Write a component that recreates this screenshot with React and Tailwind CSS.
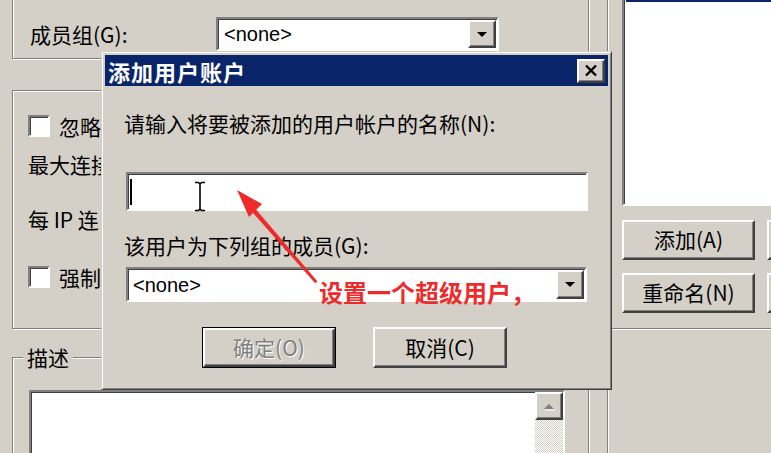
// Classic Windows dialog "添加用户账户" over a user settings form
const cjk = "font-['Noto_Sans_CJK_SC',sans-serif]";
const latin = "font-['Liberation_Sans',sans-serif]";

// classic 3D borders
const etched = "border border-[#808080] shadow-[inset_1px_1px_0_#fff,1px_1px_0_#fff]";
const raised =
  "border-2 border-t-white border-l-white border-r-[#404040] border-b-[#404040] shadow-[inset_-1px_-1px_0_#808080] bg-[#d4d0c8]";
const sunken =
  "border-2 border-t-[#808080] border-l-[#808080] border-r-white border-b-white shadow-[inset_1px_1px_0_#404040] bg-white";

function DropArrow() {
  return (
    <div className={`${raised} flex h-full w-[28px] shrink-0 items-center justify-center`}>
      <svg width="12" height="7" viewBox="0 0 12 7">
        <path d="M1 1h10L6 6z" fill="#000" />
      </svg>
    </div>
  );
}

function Combo({ className, textClass }) {
  return (
    <div className={`${sunken} flex items-stretch ${className}`}>
      <div className={`flex flex-1 items-center ${latin} text-[20px] text-black ${textClass}`}>&lt;none&gt;</div>
      <div className="py-[1px] pr-[1px]">
        <DropArrow />
      </div>
    </div>
  );
}

function CheckBox() {
  return <div className={`${sunken} h-[22px] w-[22px] shrink-0`} />;
}

function Button({ children, className = "", disabled = false }) {
  return (
    <div
      className={`${raised} flex items-center justify-center ${cjk} text-[21px] ${
        disabled ? "text-[#808080] [text-shadow:1px_1px_0_#fff]" : "text-black"
      } ${className}`}
    >
      {children}
    </div>
  );
}

export default function App() {
  return (
    <div className={`relative flex h-[453px] w-[771px] overflow-hidden bg-[#d4d0c8] ${cjk}`}>
      {/* Left column: group boxes */}
      <div className="flex w-[607px] shrink-0 flex-col pl-[12px] pr-[18px]">
        {/* Member group */}
        <div className={`${etched} mt-[-10px] flex h-[69px] shrink-0 items-center pl-[17px] pt-[19px]`}>
          <span className="w-[186px] text-[21px] leading-[24px] text-black">成员组(G):</span>
          <Combo className="h-[34px] w-[283px]" textClass="pl-[6px]" />
        </div>

        {/* Connection settings */}
        <div className={`${etched} mt-[31px] flex h-[239px] shrink-0 flex-col pl-[15px] pt-[23px] text-[21px] leading-[24px] text-black`}>
          <div className="flex items-center gap-[9px]">
            <CheckBox />
            <span>忽略</span>
          </div>
          <div className="mt-[14px]">最大连接</div>
          <div className="mt-[31px]">每 IP 连</div>
          <div className="mt-[34px] flex items-center gap-[9px]">
            <CheckBox />
            <span>强制</span>
          </div>
        </div>

        {/* Description */}
        <div className={`${etched} relative mt-[28px] flex-1 border-b-0 pl-[16px] pt-[32px]`}>
          <span className="absolute left-[10px] top-[-13px] bg-[#d4d0c8] px-[4px] text-[21px] leading-[24px] text-black">
            描述
          </span>
          <div className={`${sunken} flex h-[80px] w-[536px] justify-end`}>
            <div className="flex w-[28px] flex-col">
              <div className={`${raised} flex h-[28px] items-center justify-center`}>
                <svg width="14" height="9" viewBox="0 0 14 9">
                  <path d="M2 7L7 2l5 5z" fill="#808080" />
                  <path d="M3 8h10" stroke="#fff" strokeWidth="1" />
                </svg>
              </div>
              <div className="flex-1 bg-[repeating-conic-gradient(#d4d0c8_0%_25%,#fff_0%_50%)] bg-[length:2px_2px]" />
            </div>
          </div>
        </div>
      </div>

      {/* Right column: user list */}
      <div className="flex flex-1 flex-col border-l border-[#808080] pl-[14px] shadow-[inset_1px_0_0_#fff]">
        <div className={`${sunken} mt-[-4px] h-[210px] w-[160px] shrink-0`}>
          <div className="ml-[2px] h-[4px] bg-[#0a246a]" />
        </div>
        <div className="mt-[14px] flex gap-[12px]">
          <Button className="h-[40px] w-[133px] shrink-0">添加(A)</Button>
          <Button className="h-[40px] w-[60px] shrink-0" />
        </div>
        <div className="mt-[13px] flex gap-[12px]">
          <Button className="h-[40px] w-[133px] shrink-0">重命名(N)</Button>
          <Button className="h-[40px] w-[60px] shrink-0" />
        </div>
        <div className="ml-[-14px] mt-[15px] border-t border-[#808080] shadow-[0_1px_0_#fff]" />
      </div>

      {/* Modal dialog */}
      <div className="absolute left-[101px] top-[51px] flex h-[339px] w-[511px] flex-col border border-b-[#404040] border-l-[#d4d0c8] border-r-[#404040] border-t-[#d4d0c8] bg-[#d4d0c8] p-[3px] shadow-[inset_1px_1px_0_#fff,inset_-1px_-1px_0_#808080]">
        <div className="flex h-[31px] shrink-0 items-center justify-between bg-[#0a246a] pl-[3px] pr-[3px]">
          <span className="text-[22px] font-bold leading-[28px] tracking-[1px] text-white">添加用户账户</span>
          <div className={`${raised} flex h-[24px] w-[28px] items-center justify-center`}>
            <svg width="14" height="13" viewBox="0 0 14 13">
              <path d="M2 1.5l10 10M12 1.5l-10 10" stroke="#000" strokeWidth="2.4" />
            </svg>
          </div>
        </div>

        <div className="mt-[25px] pl-[19px] text-[21px] leading-[24px] text-black">请输入将要被添加的用户帐户的名称(N):</div>
        <div className={`${sunken} ml-[21px] mt-[37px] flex h-[39px] w-[462px] shrink-0 items-center pl-[2px]`}>
          <div className="h-[26px] w-[2px] bg-black" />
        </div>

        <div className="mt-[22px] pl-[19px] text-[21px] leading-[24px] text-black">该用户为下列组的成员(G):</div>
        <Combo className="ml-[21px] mt-[10px] h-[35px] w-[461px] shrink-0" textClass="pl-[5px]" />

        <div className="mt-[25px] flex gap-[37px] pl-[97px]">
          <div className="border border-black">
            <Button disabled className="h-[39px] w-[132px]">确定(O)</Button>
          </div>
          <Button className="h-[41px] w-[134px]">取消(C)</Button>
        </div>
      </div>

      {/* Mouse I-beam pointer */}
      <svg className="pointer-events-none absolute left-[193px] top-[181px]" width="14" height="31" viewBox="0 0 14 31">
        <path d="M2 1.5h3.5l1.5 1.5 1.5-1.5H12M7 3v25M2 29.5h3.5L7 28l1.5 1.5H12" stroke="#000" strokeWidth="1.6" fill="none" />
      </svg>

      {/* Red annotation */}
      <svg className="pointer-events-none absolute left-0 top-0" width="771" height="453" viewBox="0 0 771 453">
        <polygon points="317.3,281.2 315.2,283.2 252.4,212.2 255.8,209.2" fill="#ee2a2a" />
        <polygon points="237,190 262,204 256,210 249,217" fill="#ee2a2a" />
      </svg>
      <span className="absolute left-[319px] top-[277px] text-[24px] font-bold leading-[30px] text-[#ee2a2a]">设置一个超级用户，</span>
    </div>
  );
}
